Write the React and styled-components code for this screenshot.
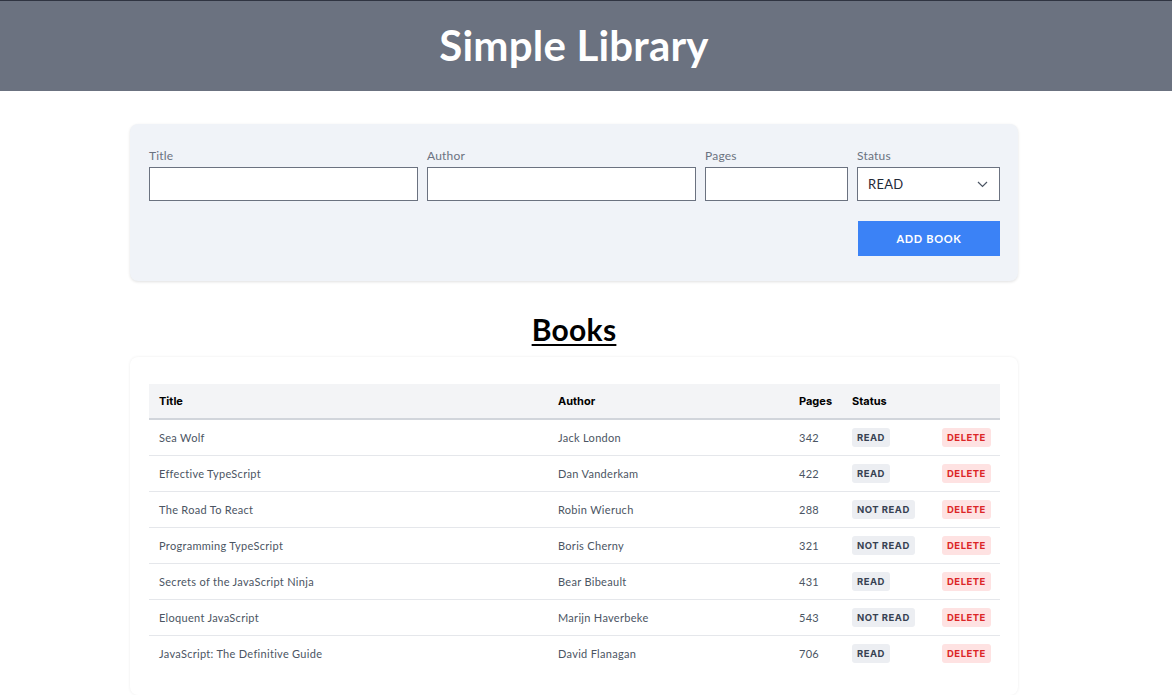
import React from "react";
import styled, { createGlobalStyle } from "styled-components";

const GlobalStyle = createGlobalStyle`
  * { box-sizing: border-box; }
  body {
    margin: 0;
    background: #ffffff;
    font-family: "Lato", "Open Sans", sans-serif;
    color: #111827;
  }
`;

const Header = styled.header`
  height: 91px;
  background: #6b7280;
  border-top: 1px solid #2f3441;
`;

const HeaderInner = styled.div`
  width: 1148px;
  height: 100%;
  display: flex;
  align-items: center;
  justify-content: center;
`;

const Brand = styled.h1`
  margin: 0;
  color: #ffffff;
  font-family: "Lato", sans-serif;
  font-weight: 700;
  font-size: 42px;
  letter-spacing: 0.2px;
  line-height: 1;
  padding-bottom: 2px;
`;

const Content = styled.div`
  width: 1148px;
`;

const Main = styled.main`
  width: 888px;
  margin: 33px auto 0;
`;

const FormCard = styled.form`
  background: #f0f3f8;
  border-radius: 8px;
  box-shadow: 0 1px 3px rgba(0, 0, 0, 0.12);
  padding: 24px 18px 25px 19px;
`;

const FieldGrid = styled.div`
  display: grid;
  grid-template-columns: 269px 269px 143px 143px;
  column-gap: 9px;
`;

const Field = styled.label`
  display: flex;
  flex-direction: column;
`;

const LabelText = styled.span`
  font-size: 12px;
  line-height: 16px;
  letter-spacing: 0.2px;
  color: #6b7280;
  margin-bottom: 3px;
`;

const TextInput = styled.input`
  height: 34px;
  border: 1px solid #6b7280;
  background: #ffffff;
  font-family: inherit;
  font-size: 13px;
  padding: 0 10px;
  outline: none;
`;

const SelectWrap = styled.div`
  position: relative;
  height: 34px;
`;

const Select = styled.select`
  appearance: none;
  width: 100%;
  height: 34px;
  border: 1px solid #6b7280;
  border-radius: 0;
  background: #ffffff;
  font-family: "Lato", sans-serif;
  font-size: 13px;
  letter-spacing: 0.3px;
  color: #1f2937;
  padding: 0 10px;
  outline: none;
`;

const Chevron = styled.svg`
  position: absolute;
  right: 12px;
  top: 14px;
  pointer-events: none;
`;

const Actions = styled.div`
  display: flex;
  justify-content: flex-end;
  margin-top: 20px;
`;

const PrimaryButton = styled.button`
  width: 142px;
  height: 35px;
  border: none;
  background: #3b82f6;
  color: #ffffff;
  font-family: "Lato", sans-serif;
  font-weight: 700;
  font-size: 11px;
  letter-spacing: 0.7px;
  text-transform: uppercase;
  cursor: pointer;
`;

const SectionTitle = styled.h2`
  margin: 31px 0 11px;
  text-align: center;
  font-family: "Lato", sans-serif;
  font-size: 30px;
  line-height: 34px;
  font-weight: 700;
  letter-spacing: 0.3px;
  color: #000000;
  text-decoration: underline;
  text-decoration-thickness: 2px;
  text-underline-offset: 3px;
`;

const TableCard = styled.section`
  background: #ffffff;
  border-radius: 8px;
  box-shadow: 0 0 3px rgba(0, 0, 0, 0.08);
  padding: 27px 18px 24px 19px;
`;

const Table = styled.table`
  width: 851px;
  border-collapse: collapse;
  table-layout: fixed;
`;

const HeadCell = styled.th`
  background: #f3f4f6;
  height: 35px;
  padding: 0 10px;
  text-align: left;
  font-family: "Inter", sans-serif;
  font-weight: 700;
  font-size: 11px;
  color: #000000;
  border-bottom: 2px solid #d1d5db;
`;

const Row = styled.tr`
  border-bottom: 1px solid #e5e7eb;
  &:last-child { border-bottom: none; }
`;

const Cell = styled.td`
  height: 36px;
  padding: 0 10px;
  font-size: 11px;
  letter-spacing: 0.3px;
  color: #4b5563;
  vertical-align: middle;
`;

const Badge = styled.span`
  display: inline-block;
  padding: 0 5px;
  height: 19px;
  line-height: 19px;
  border-radius: 3px;
  font-family: "Inter", sans-serif;
  font-weight: 700;
  font-size: 9.5px;
  letter-spacing: 0.5px;
  background: ${(p) => (p.$tone === "danger" ? "#fee2e2" : "#eceef2")};
  color: ${(p) => (p.$tone === "danger" ? "#dc2626" : "#374151")};
`;

const books = [
  { title: "Sea Wolf", author: "Jack London", pages: 342, read: true },
  { title: "Effective TypeScript", author: "Dan Vanderkam", pages: 422, read: true },
  { title: "The Road To React", author: "Robin Wieruch", pages: 288, read: false },
  { title: "Programming TypeScript", author: "Boris Cherny", pages: 321, read: false },
  { title: "Secrets of the JavaScript Ninja", author: "Bear Bibeault", pages: 431, read: true },
  { title: "Eloquent JavaScript", author: "Marijn Haverbeke", pages: 543, read: false },
  { title: "JavaScript: The Definitive Guide", author: "David Flanagan", pages: 706, read: true },
];

export default function App() {
  return (
    <>
      <GlobalStyle />
      <Header>
        <HeaderInner>
          <Brand>Simple Library</Brand>
        </HeaderInner>
      </Header>
      <Content>
        <Main>
          <FormCard onSubmit={(e) => e.preventDefault()}>
            <FieldGrid>
              <Field>
                <LabelText>Title</LabelText>
                <TextInput type="text" />
              </Field>
              <Field>
                <LabelText>Author</LabelText>
                <TextInput type="text" />
              </Field>
              <Field>
                <LabelText>Pages</LabelText>
                <TextInput type="number" />
              </Field>
              <Field>
                <LabelText>Status</LabelText>
                <SelectWrap>
                  <Select defaultValue="READ">
                    <option value="READ">READ</option>
                    <option value="NOT READ">NOT READ</option>
                  </Select>
                  <Chevron width="11" height="7" viewBox="0 0 11 7" fill="none">
                    <path d="M1 1L5.5 5.5L10 1" stroke="#4b5563" strokeWidth="1.2" />
                  </Chevron>
                </SelectWrap>
              </Field>
            </FieldGrid>
            <Actions>
              <PrimaryButton type="submit">Add Book</PrimaryButton>
            </Actions>
          </FormCard>

          <SectionTitle>Books</SectionTitle>

          <TableCard>
            <Table>
              <colgroup>
                <col style={{ width: 399 }} />
                <col style={{ width: 241 }} />
                <col style={{ width: 53 }} />
                <col style={{ width: 90 }} />
                <col style={{ width: 68 }} />
              </colgroup>
              <thead>
                <tr>
                  <HeadCell>Title</HeadCell>
                  <HeadCell>Author</HeadCell>
                  <HeadCell>Pages</HeadCell>
                  <HeadCell>Status</HeadCell>
                  <HeadCell />
                </tr>
              </thead>
              <tbody>
                {books.map((b) => (
                  <Row key={b.title}>
                    <Cell>{b.title}</Cell>
                    <Cell>{b.author}</Cell>
                    <Cell>{b.pages}</Cell>
                    <Cell>
                      <Badge>{b.read ? "READ" : "NOT READ"}</Badge>
                    </Cell>
                    <Cell>
                      <Badge $tone="danger">DELETE</Badge>
                    </Cell>
                  </Row>
                ))}
              </tbody>
            </Table>
          </TableCard>
        </Main>
      </Content>
    </>
  );
}
